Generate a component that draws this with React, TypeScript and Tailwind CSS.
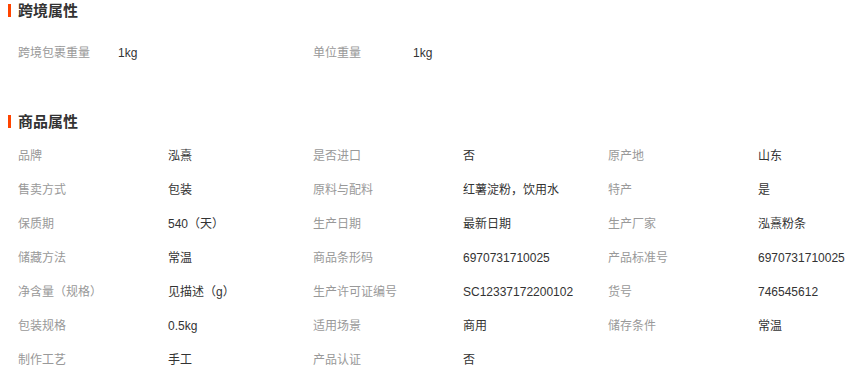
const font = {
  fontFamily: '"Liberation Sans", "Noto Sans CJK SC", sans-serif',
};

type Attr = [string, string];

const crossBorder: Attr[] = [
  ["跨境包裹重量", "1kg"],
  ["单位重量", "1kg"],
];

const goods: Attr[] = [
  ["品牌", "泓熹"],
  ["是否进口", "否"],
  ["原产地", "山东"],
  ["售卖方式", "包装"],
  ["原料与配料", "红薯淀粉，饮用水"],
  ["特产", "是"],
  ["保质期", "540（天）"],
  ["生产日期", "最新日期"],
  ["生产厂家", "泓熹粉条"],
  ["储藏方法", "常温"],
  ["商品条形码", "6970731710025"],
  ["产品标准号", "6970731710025"],
  ["净含量（规格）", "见描述（g）"],
  ["生产许可证编号", "SC12337172200102"],
  ["货号", "746545612"],
  ["包装规格", "0.5kg"],
  ["适用场景", "商用"],
  ["储存条件", "常温"],
  ["制作工艺", "手工"],
  ["产品认证", "否"],
];

function Title({ text }: { text: string }) {
  return (
    <div className="flex items-center h-[20px] pl-[8px]">
      <span className="w-[3px] h-[13px] bg-[#ff4400]" />
      <span className="ml-[7px] text-[15px] font-bold text-[#333] leading-none">
        {text}
      </span>
    </div>
  );
}

function Grid({ items, labelW }: { items: Attr[]; labelW: string }) {
  return (
    <div className="grid grid-cols-[295px_295px_275px] pl-[18px]">
      {items.map(([k, v], i) => (
        <div key={i} className="flex items-center h-[34px] text-[12px]">
          <span className={`${labelW} shrink-0 text-[#999]`}>{k}</span>
          <span className="text-[#333] whitespace-nowrap">{v}</span>
        </div>
      ))}
    </div>
  );
}

export default function App() {
  return (
    <div className="w-[865px] h-[382px] bg-white overflow-hidden" style={font}>
      <Title text="跨境属性" />
      <div className="mt-[16px]">
        <Grid items={crossBorder} labelW="w-[100px]" />
      </div>
      <div className="mt-[41px]">
        <Title text="商品属性" />
      </div>
      <div className="mt-[8px]">
        <Grid items={goods} labelW="w-[150px]" />
      </div>
    </div>
  );
}
